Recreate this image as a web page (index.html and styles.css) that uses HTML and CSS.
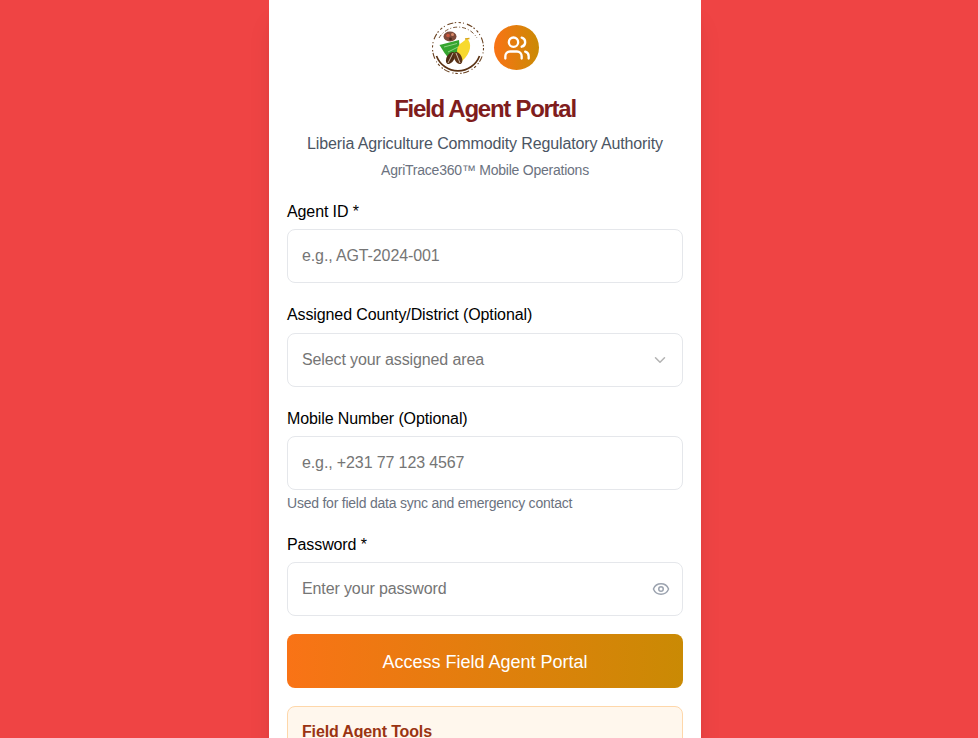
FILE: index.html
```html
<!DOCTYPE html>
<html lang="en">
<head>
  <meta charset="UTF-8">
  <title>Field Agent Portal</title>
  <link rel="stylesheet" href="styles.css">
</head>
<body>
  <div class="page">
    <div class="card">
      <div class="logos">
        <svg class="logo" width="56" height="56" viewBox="1 0 56 56">
          <circle cx="28" cy="28" r="25.5" fill="#fff" stroke="#6b4423" stroke-width="1.1" stroke-dasharray="2.5 2 1 3 6 1.5 1.5 2.5"/>
          <path d="M6.5 36a23 23 0 0 0 43 0" fill="none" stroke="#5a3214" stroke-width="1.7"/>
          <path d="M9 18a22 22 0 0 1 38 0" fill="none" stroke="#6b4423" stroke-width="0.9" stroke-dasharray="4 2 1 2"/>
          <ellipse cx="20" cy="16.5" rx="6.5" ry="5" fill="#7d4a3a"/>
          <circle cx="18" cy="15.5" r="1.8" fill="#c9563c"/>
          <circle cx="22.5" cy="14.5" r="1.5" fill="#d98a6a"/>
          <circle cx="20.5" cy="19" r="1.4" fill="#4a2a1c"/>
          <path d="M9.5 25 L29 20 L30 31 L20 40 L14.5 33Z" fill="#35a52f"/>
          <path d="M14 27 L27 23.5 M18 32 L28 27" stroke="#a9dd9c" stroke-width="0.8" fill="none"/>
          <path d="M37 18.5 C42 23 41.5 33 32 41 C26.5 36 25 28.5 30.5 23.5 C33 21.5 35 20.5 37 18.5Z" fill="#f7d92e"/>
          <path d="M35 19 L39.5 18.5" stroke="#d9a81c" stroke-width="1.5"/>
          <ellipse cx="20.5" cy="38" rx="3.8" ry="6.5" transform="rotate(30 20.5 38)" fill="#4f2c14"/>
          <ellipse cx="28" cy="38" rx="3.8" ry="6.5" transform="rotate(-25 28 38)" fill="#5e3519"/>
          <path d="M18 43 L23 33 M30 43 L26 33" stroke="#e8dccb" stroke-width="0.8"/>
        </svg>
        <div class="avatar">
          <svg width="28" height="28" viewBox="0 0 24 24" fill="none" stroke="#fff" stroke-width="2" stroke-linecap="round" stroke-linejoin="round">
            <path d="M16 21v-2a4 4 0 0 0-4-4H6a4 4 0 0 0-4 4v2"/>
            <circle cx="9" cy="7" r="4"/>
            <path d="M22 21v-2a4 4 0 0 0-3-3.87"/>
            <path d="M16 3.13a4 4 0 0 1 0 7.75"/>
          </svg>
        </div>
      </div>

      <h1>Field Agent Portal</h1>
      <p class="subtitle">Liberia Agriculture Commodity Regulatory Authority</p>
      <p class="tagline">AgriTrace360™ Mobile Operations</p>

      <form>
        <div class="field">
          <label for="agent">Agent ID *</label>
          <input type="text" id="agent" placeholder="e.g., AGT-2024-001">
        </div>

        <div class="field">
          <label for="area">Assigned County/District (Optional)</label>
          <div class="control">
            <div class="select" id="area">Select your assigned area</div>
            <svg class="icon chevron" width="18" height="18" viewBox="0 0 24 24" fill="none" stroke="#b3b3b3" stroke-width="2" stroke-linecap="round" stroke-linejoin="round">
              <path d="m6 9 6 6 6-6"/>
            </svg>
          </div>
        </div>

        <div class="field">
          <label for="mobile">Mobile Number (Optional)</label>
          <input type="text" id="mobile" placeholder="e.g., +231 77 123 4567">
          <p class="hint">Used for field data sync and emergency contact</p>
        </div>

        <div class="field field-last">
          <label for="password">Password *</label>
          <div class="control">
            <input type="password" id="password" placeholder="Enter your password">
            <svg class="icon eye" width="18" height="18" viewBox="0 0 24 24" fill="none" stroke="#9ca3af" stroke-width="2" stroke-linecap="round" stroke-linejoin="round">
              <path d="M2.06 12.35a1 1 0 0 1 0-.7 10.75 10.75 0 0 1 19.88 0 1 1 0 0 1 0 .7 10.75 10.75 0 0 1-19.88 0"/>
              <circle cx="12" cy="12" r="3"/>
            </svg>
          </div>
        </div>

        <button type="button">Access Field Agent Portal</button>
      </form>

      <div class="tools">
        <h3>Field Agent Tools</h3>
      </div>
    </div>
  </div>
</body>
</html>
```

FILE: styles.css
```css
* {
  box-sizing: border-box;
}
html, body {
  margin: 0;
  height: 100%;
}
body {
  font-family: "Liberation Sans", Arial, sans-serif;
  background: #ef4444;
}
.page {
  height: 100vh;
  padding-right: 8px;
  overflow: hidden;
  display: flex;
  justify-content: center;
}
.card {
  width: 432px;
  height: 900px;
  padding: 20px 18px 0;
  background: white;
  box-shadow: 0 20px 25px -5px rgba(0,0,0,0.1), 0 8px 10px -6px rgba(0,0,0,0.1);
}
.logos {
  display: flex;
  justify-content: center;
  align-items: center;
  gap: 7px;
  height: 55px;
}
.avatar {
  width: 45px;
  height: 45px;
  border-radius: 50%;
  display: flex;
  align-items: center;
  justify-content: center;
  background: linear-gradient(90deg, #f97316, #ca8a04);
}
h1 {
  margin: 18px 0 0;
  font-size: 24px;
  line-height: 31px;
  letter-spacing: -1.27px;
  font-weight: bold;
  text-align: center;
  color: #7f1d1d;
}
.subtitle {
  margin: 8px 0 0;
  font-size: 16px;
  line-height: 24px;
  letter-spacing: -0.12px;
  text-align: center;
  color: #4b5563;
}
.tagline {
  margin: 4px 0 0;
  font-size: 14px;
  line-height: 20px;
  letter-spacing: -0.23px;
  text-align: center;
  color: #6b7280;
}
form {
  margin-top: 19.9px;
}
.field {
  margin-bottom: 20.3px;
}
.field-last {
  margin-bottom: 18px;
}
label {
  display: block;
  margin-bottom: 5.5px;
  font-size: 16px;
  line-height: 24px;
  letter-spacing: -0.11px;
  color: #000;
}
input, .select {
  display: block;
  width: 100%;
  height: 53.7px;
  padding: 0 14px;
  border: 1px solid #e5e7eb;
  border-radius: 8px;
  background: white;
  font-family: inherit;
  font-size: 16px;
  line-height: 51.7px;
  letter-spacing: -0.12px;
}
input::placeholder {
  color: #757575;
  opacity: 1;
}
.select {
  color: #757575;
}
.control {
  position: relative;
}
.icon {
  position: absolute;
  top: 50%;
  right: 13px;
  transform: translateY(-50%);
}
.chevron {
  right: 14px;
}
.hint {
  margin: 4px 0 0;
  font-size: 14px;
  line-height: 18.5px;
  letter-spacing: -0.23px;
  color: #6b7280;
}
button {
  display: block;
  width: 100%;
  height: 54px;
  padding: 2px 0 0;
  border: none;
  border-radius: 8px;
  background: linear-gradient(90deg, #f97316, #ca8a04);
  color: white;
  font-family: inherit;
  font-size: 18px;
  font-weight: 500;
}
.tools {
  margin-top: 18px;
  padding: 13px 14px;
  border: 1px solid #fed7aa;
  border-radius: 8px;
  background: #fff7ed;
}
h3 {
  margin: 0;
  font-size: 16px;
  line-height: 24px;
  letter-spacing: -0.15px;
  font-weight: bold;
  color: #9a3412;
}
```
